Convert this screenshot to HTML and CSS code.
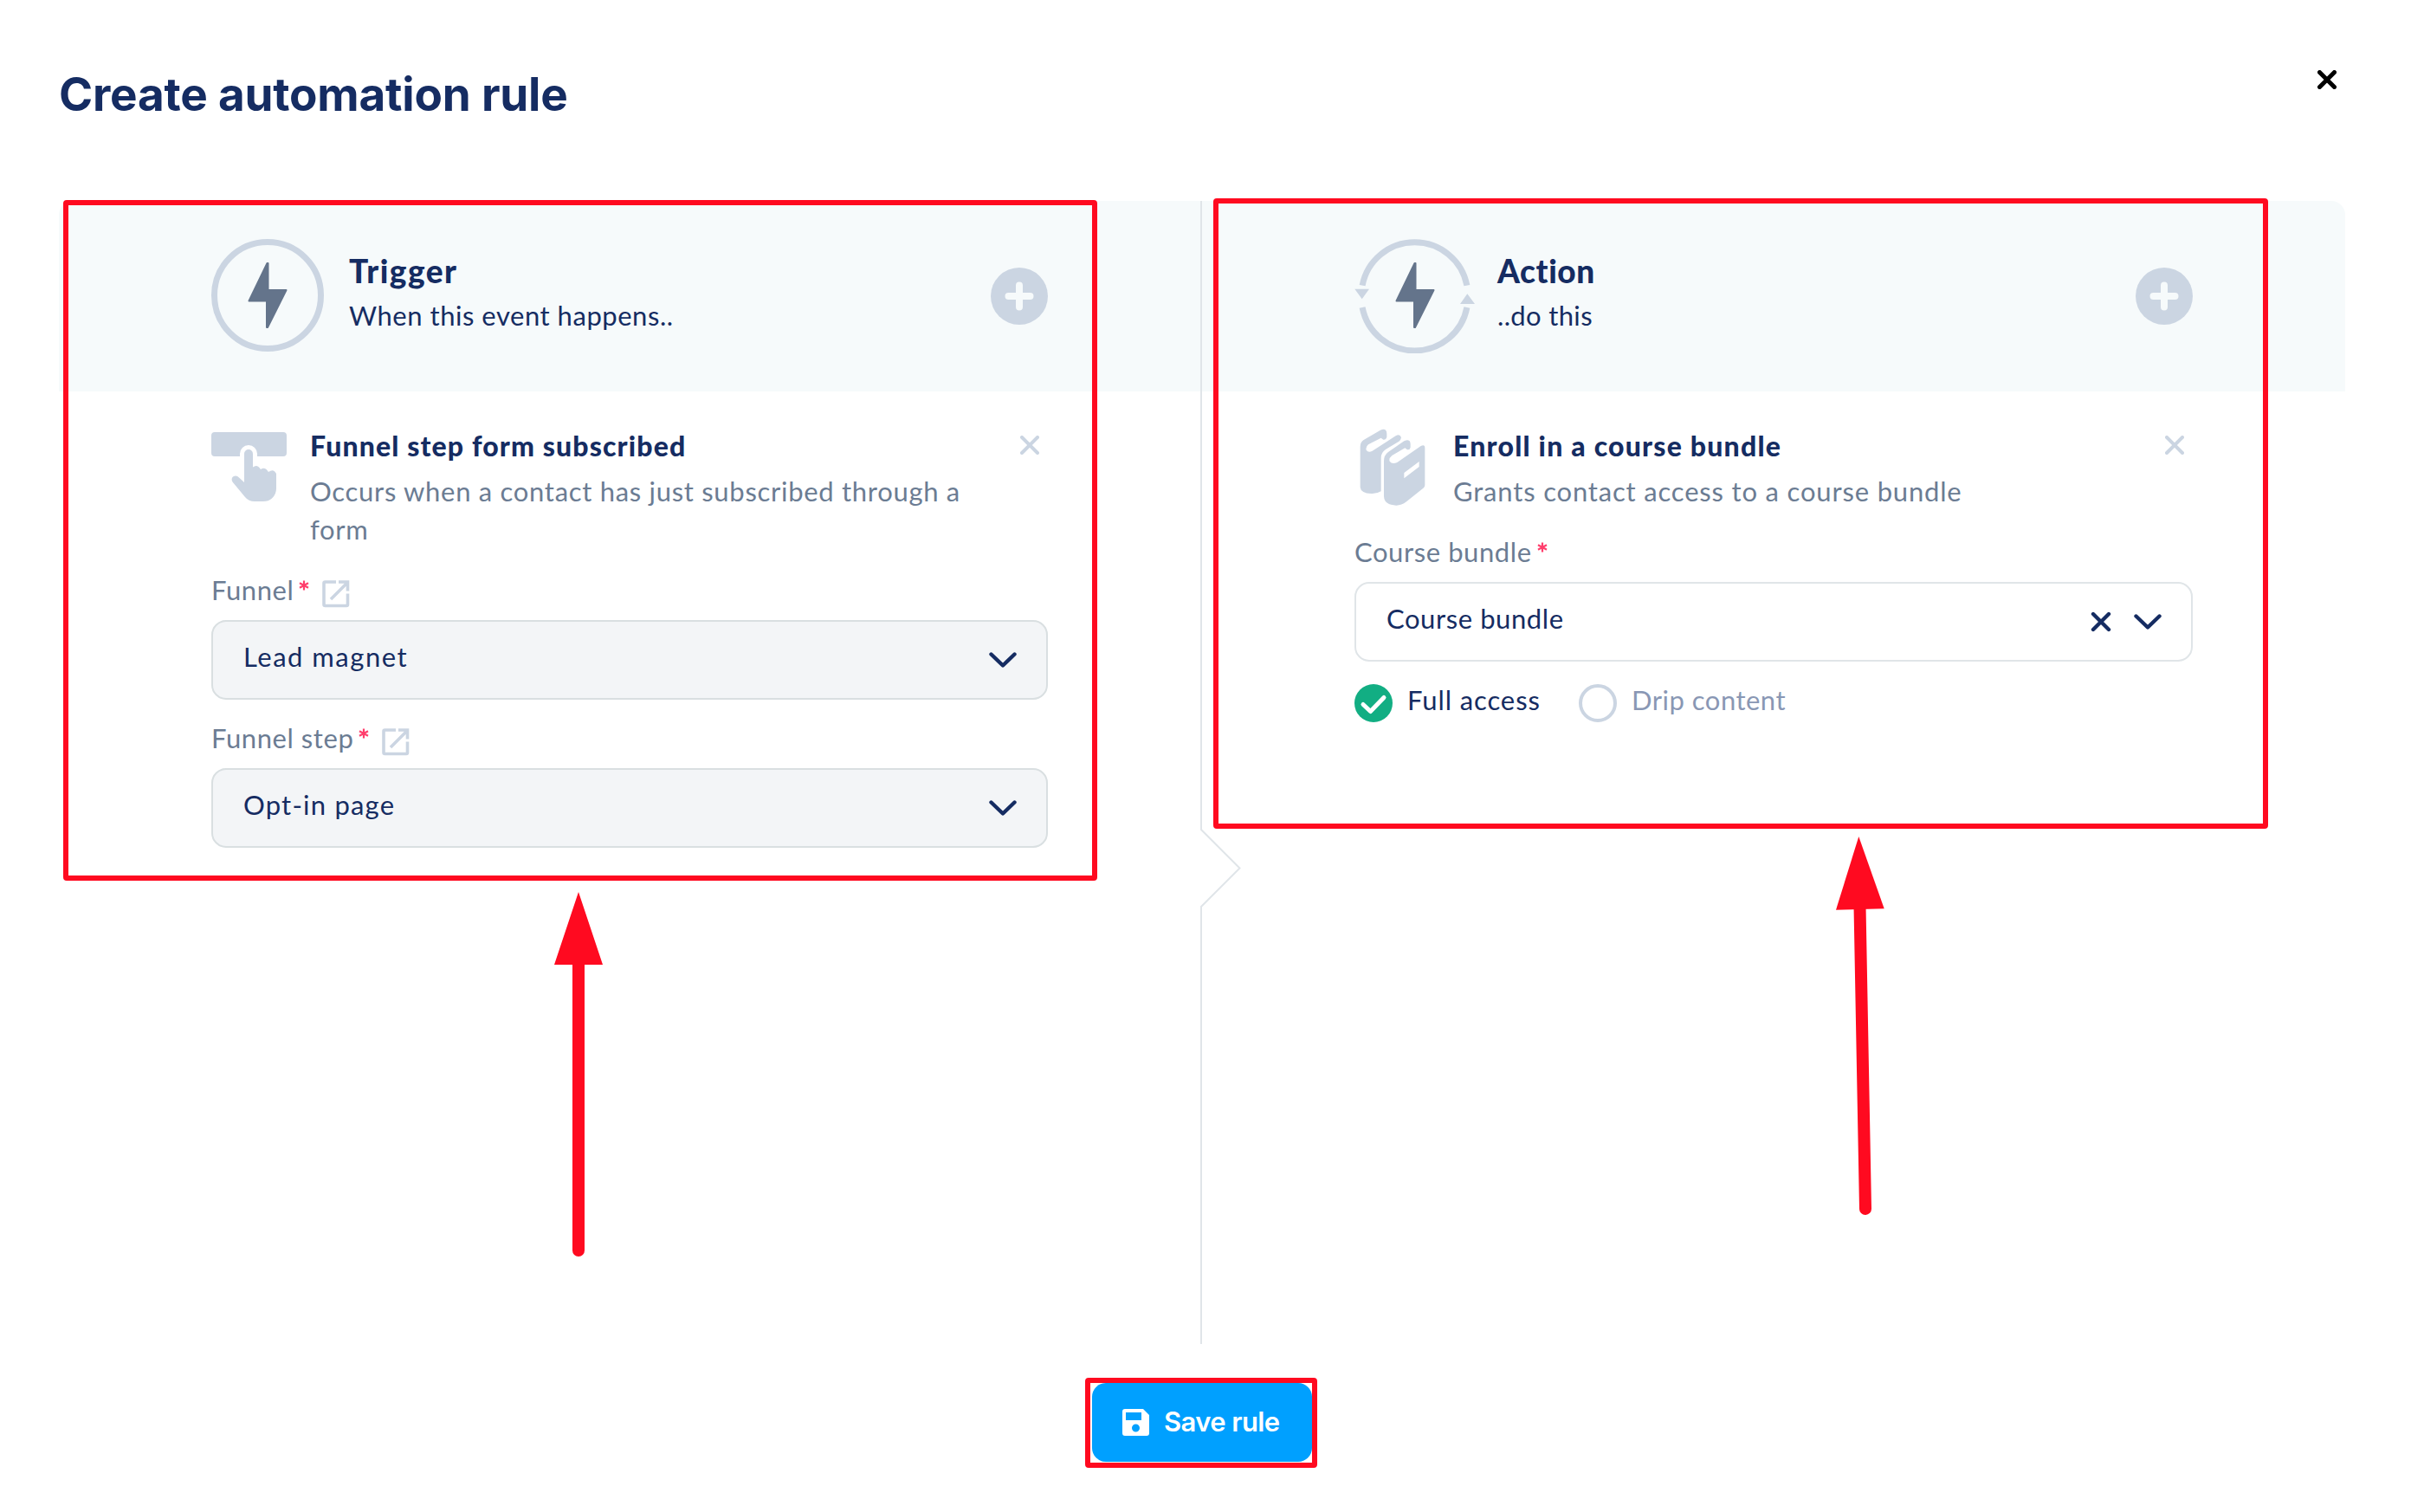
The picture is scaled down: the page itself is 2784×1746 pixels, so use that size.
FILE: index.html
```html
<!DOCTYPE html>
<html lang="en">
<head>
<meta charset="utf-8">
<title>Create automation rule</title>
<link rel="stylesheet" href="styles.css">
</head>
<body>
<main class="dialog">
  <header class="dialog-head">
    <h1 class="title">Create automation rule</h1>
    <button class="close" aria-label="Close"><svg width="22" height="22" viewBox="0 0 22 22"><path d="M2.500 2.500 19.500 19.500M19.500 2.500 2.500 19.500"/></svg></button>
  </header>

  <div class="board">
    <section class="column column-left">
      <div class="band band-left">
        <svg width="130" height="132" viewBox="0 0 130 132"><circle class="ring" cx="65" cy="65" r="61.5"/><path class="bolt" d="M65.500 28V59H86.500L65 102H64V71.500H43.500L64.500 28Z"/></svg>
        <div class="band-text"><h2 class="band-title t-trigger">Trigger</h2><p class="band-sub t-when">When this event happens..</p></div>
        <button class="add" aria-label="Add trigger"><svg width="66" height="66" viewBox="0 0 66 66"><circle cx="33" cy="33" r="33"/><path d="M33 20.500V45.500M20.500 33H45.500"/></svg></button>
      </div>
      <div class="body">
        <div class="item item-trigger">
          <svg class="item-icon tap" width="88" height="82" viewBox="0 0 88 82"><path d="M4 0H83Q87 0 87 4V24Q87 28 83 28H53V25A10 10 0 0 0 33 25V28H4Q0 28 0 24V4Q0 0 4 0Z"/><path d="M38 25A5 5 0 0 1 48 25V40.500Q53 36.500 57 43Q62 39.500 66 46Q72 41.500 75 48V65Q75 72 70 76.500Q66 80 60 80H50Q43 80 39 75L24.500 57.500Q22.500 54 25 51.500Q29 49 32 52.500L38 58Z"/></svg>
          <div class="item-text"><h3 class="item-title t-form">Funnel step form subscribed</h3><p class="item-desc t-occurs">Occurs when a contact has just subscribed through a<br>form</p></div>
          <button class="remove" aria-label="Remove"><svg width="22" height="22" viewBox="0 0 22 22"><path d="M2 2 20 20M20 2 2 20"/></svg></button>
        </div>
        <div class="label"><span class="t-label">Funnel</span><svg class="star" width="12" height="12" viewBox="0 0 12 12"><path d="M6 .5V11.500M1 3.200 11 8.800M11 3.200 1 8.800"/></svg><svg class="ext" width="32" height="32" viewBox="0 0 32 32"><path d="M16 2H3.500Q2 2 2 3.500V28Q2 29.500 3.500 29.500H28Q29.500 29.500 29.500 28V15.500M19 2H29.500V12.500M29 3 10 22"/></svg></div>
        <div class="field field-muted"><span class="value t-lead">Lead magnet</span><svg class="chev" width="32" height="18" viewBox="0 0 32 18"><path d="M2.500 2.500 16 15.500 29.500 2.500"/></svg></div>
        <div class="label label-next"><span class="t-label">Funnel step</span><svg class="star" width="12" height="12" viewBox="0 0 12 12"><path d="M6 .5V11.500M1 3.200 11 8.800M11 3.200 1 8.800"/></svg><svg class="ext" width="32" height="32" viewBox="0 0 32 32"><path d="M16 2H3.500Q2 2 2 3.500V28Q2 29.500 3.500 29.500H28Q29.500 29.500 29.500 28V15.500M19 2H29.500V12.500M29 3 10 22"/></svg></div>
        <div class="field field-muted"><span class="value t-opt">Opt-in page</span><svg class="chev" width="32" height="18" viewBox="0 0 32 18"><path d="M2.500 2.500 16 15.500 29.500 2.500"/></svg></div>
      </div>
    </section>

    <svg class="divider" width="48" height="1320" viewBox="0 0 48 1320"><path d="M1 0V726M0 725 45.500 770.500 1 815V1320"/></svg>

    <section class="column column-right">
      <div class="band band-right">
        <svg width="139" height="132" viewBox="0 0 139 132"><path class="ring" d="M9.100 53.700A61.500 61.500 0 0 1 129.900 53.700M9.100 79A61.500 61.500 0 0 0 129.900 79"/><path class="arrow" d="M0.300 57.700H17L8.700 69.300ZM122 75H139L130.300 63.300Z"/><path class="bolt" d="M70.500 28V59H91.500L70 102H69V71.500H48.500L69.500 28Z"/></svg>
        <div class="band-text band-text-action"><h2 class="band-title t-action">Action</h2><p class="band-sub t-do">..do this</p></div>
        <button class="add" aria-label="Add action"><svg width="66" height="66" viewBox="0 0 66 66"><circle cx="33" cy="33" r="33"/><path d="M33 20.500V45.500M20.500 33H45.500"/></svg></button>
      </div>
      <div class="body">
        <div class="item item-action">
          <svg class="item-icon" width="88" height="94" viewBox="42 45 264 282"><path d="M62 107Q62 92 74 84L132 50Q153 41 154 62V74Q151 84 142 83L134 77 90 100Q80 108 83 119Q90 130 104 122L185 70Q200 62 204 76Q203 84 196 89L150 117Q134 128 134 146V262Q120 271 100 270Q64 268 62 248Z"/><path fill-rule="evenodd" d="M144 157Q144 138 158 127L214 88Q235 78 236 98V110Q234 119 225 118L217 112 172 138Q160 148 164 158Q172 170 190 162L272 105Q286 98 286 112V240Q286 246 282 250L222 298Q205 311 187 311Q146 310 144 280ZM214 198 266 159V177L214 217Z"/></svg>
          <div class="item-text"><h3 class="item-title t-enroll">Enroll in a course bundle</h3><p class="item-desc t-grants">Grants contact access to a course bundle</p></div>
          <button class="remove" aria-label="Remove"><svg width="22" height="22" viewBox="0 0 22 22"><path d="M2 2 20 20M20 2 2 20"/></svg></button>
        </div>
        <div class="label"><span class="t-label">Course bundle</span><svg class="star" width="12" height="12" viewBox="0 0 12 12"><path d="M6 .5V11.500M1 3.200 11 8.800M11 3.200 1 8.800"/></svg></div>
        <div class="field"><span class="value t-bundle">Course bundle</span><svg class="chev clear" width="24" height="24" viewBox="0 0 24 24"><path d="M3 3 21 21M21 3 3 21"/></svg><svg class="chev" width="32" height="18" viewBox="0 0 32 18"><path d="M2.500 2.500 16 15.500 29.500 2.500"/></svg></div>
        <div class="radios">
          <svg width="44" height="44" viewBox="0 0 44 44"><circle class="on" cx="22" cy="22" r="22"/><path class="tick" d="M10 23.500 18.500 31.500 34 15.500"/></svg>
          <span class="radio-text t-full">Full access</span>
          <svg width="44" height="44" viewBox="0 0 44 44"><circle class="off" cx="22" cy="22" r="20"/></svg>
          <span class="radio-text radio-off t-drip">Drip content</span>
        </div>
      </div>
    </section>
  </div>

  <footer class="foot">
    <button class="save"><svg width="31" height="31" viewBox="0 0 31 31"><path fill-rule="evenodd" d="M3 0H24L31 7V28Q31 31 28 31H3Q0 31 0 28V3Q0 0 3 0ZM4 4V13H22V4ZM15.500 17.500A4.500 4.500 0 1 0 15.500 26.500A4.500 4.500 0 1 0 15.500 17.500Z"/></svg><span>Save rule</span></button>
  </footer>
</main>

<div class="mark mark-trigger"></div>
<div class="mark mark-action"></div>
<div class="mark mark-save"></div>
<svg class="pointer pointer-trigger" width="56" height="422" viewBox="0 0 56 422"><path class="shaft" d="M28 80V414"/><path class="tip" d="M28 0 56 84H0Z"/></svg>
<svg class="pointer pointer-action" width="60" height="440" viewBox="0 0 60 440"><path class="shaft" d="M27.500 80 34 430"/><path class="tip" d="M26.300 0 55.700 83.300 0 84.700Z"/></svg>
</body>
</html>
```

FILE: styles.css
```css
* { box-sizing: border-box; margin: 0; padding: 0; }
body { width: 2784px; height: 1746px; background: #fff; position: relative; overflow: hidden; color: #152c62; font-family: Lato, "Liberation Sans", sans-serif; font-size: 31px; font-weight: 400; }
button { border: 0; background: none; font: inherit; color: inherit; display: flex; flex: none; }
svg { display: block; flex: none; fill: none; }

.dialog { height: 1746px; padding: 0 76px 0 68px; display: flex; flex-direction: column; }
.dialog-head { height: 232px; display: flex; justify-content: space-between; align-items: flex-start; }
.title { font: 650 53px/64px Inter, "Liberation Sans", sans-serif; letter-spacing: -0.2px; margin-top: 77px; white-space: nowrap; }
.close { margin: 81px 10px 0 0; }
.close path { stroke: #000; stroke-width: 5; stroke-linecap: round; }

.board { display: flex; height: 1320px; }
.column { flex: none; }
.column-left { width: 1318px; }
.column-right { width: 1320px; }
.divider { margin-right: -46px; position: relative; }
.divider path { stroke: #e0e5e9; stroke-width: 2; }

.band { height: 220px; background: #f6fafb; display: flex; align-items: flex-start; padding: 44px 176px 0; }
.band-left { border-radius: 16px 0 0 0; }
.band-right { border-radius: 0 16px 0 0; }
.ring { stroke: #cbd5e2; stroke-width: 7; }
.bolt { fill: #64748b; stroke: #64748b; stroke-width: 2; stroke-linejoin: round; }
.arrow { fill: #cbd5e2; }
.band-text { flex: 1; margin-left: 29px; padding-top: 15px; white-space: nowrap; }
.band-text-action { margin-left: 26px; }
.band-title { font-size: 37px; line-height: 44px; font-weight: 900; }
.band-sub { line-height: 40px; margin-top: 9px; }
.add { margin-top: 33px; }
.add circle { fill: #cbd5e2; }
.add path { stroke: #f6fafb; stroke-width: 8; stroke-linecap: round; }

.body { padding: 43px 176px 0; }
.item { display: flex; align-items: flex-start; }
.item-trigger { height: 166px; }
.item-action { height: 122px; }
.item-icon path { fill: #cbd5e2; }
.tap { margin-top: 4px; }
.item-text { flex: 1; margin-left: 26px; white-space: nowrap; }
.item-title { font-size: 32px; line-height: 40px; font-weight: 900; }
.item-desc { line-height: 44px; margin-top: 10px; color: #6b7c93; }
.remove { margin: 8px 10px 0 0; }
.remove path { stroke: #cbd5e2; stroke-width: 4; stroke-linecap: round; }

.label { display: flex; height: 55px; line-height: 40px; color: #6b7c93; white-space: nowrap; }
.label-next { margin-top: 24px; }
.star { margin: 9px 0 0 6px; }
.star path { stroke: #ff3e6c; stroke-width: 2.2; }
.ext { margin: 9px 0 0 15px; }
.ext path { stroke: #cbd5e2; stroke-width: 3.6; }
.field { height: 92px; border: 2px solid #e0e5e8; border-radius: 17px; display: flex; align-items: center; padding: 0 34px 0 35px; }
.field-muted { background: #f3f5f7; border-color: #d9dfe1; }
.value { flex: 1; line-height: 40px; padding-bottom: 8px; white-space: nowrap; }
.chev path { stroke: #152c62; stroke-width: 4.4; stroke-linecap: round; stroke-linejoin: round; }
.clear { margin-right: 26px; }
.radios { display: flex; margin-top: 26px; }
.on { fill: #12ae83; }
.off { stroke: #cbd5e2; stroke-width: 4; }
.tick { stroke: #fff; stroke-width: 5; stroke-linejoin: round; stroke-linecap: round; }
.radio-text { line-height: 40px; margin: -2px 0 0 17px; white-space: nowrap; }
.radio-off { color: #8997b4; }

.t-trigger { letter-spacing: 1.5px; }
.t-action { letter-spacing: 0.6px; }
.t-when { letter-spacing: 0.53px; }
.t-do { letter-spacing: 0.35px; }
.t-form { letter-spacing: 1.12px; }
.t-occurs { letter-spacing: 0.7px; }
.t-enroll { letter-spacing: 1.2px; }
.t-grants { letter-spacing: 0.82px; }
.t-label { letter-spacing: 0.57px; }
.t-lead { letter-spacing: 1.5px; }
.t-opt { letter-spacing: 1.2px; }
.t-bundle { letter-spacing: 0.57px; }
.t-full { letter-spacing: 0.9px; width: 198px; }
.t-drip { letter-spacing: 0.5px; }

.foot { display: flex; justify-content: center; padding-top: 45px; }
.save { width: 254px; height: 91px; border-radius: 16px; background: #00a0ff; align-items: center; padding-left: 35px; color: #fff; font: 600 31px/40px Inter, "Liberation Sans", sans-serif; letter-spacing: -0.6px; white-space: nowrap; }
.save path { fill: #fff; }
.save span { margin: 0 0 2px 17px; }

.mark { position: absolute; border: 6px solid #ff0a20; border-radius: 4px; }
.mark-trigger { left: 73px; top: 231px; width: 1194px; height: 786px; }
.mark-action { left: 1401px; top: 229px; width: 1218px; height: 728px; }
.mark-save { left: 1253px; top: 1591px; width: 268px; height: 104px; }
.pointer { position: absolute; }
.pointer-trigger { left: 640px; top: 1030px; }
.pointer-action { left: 2120px; top: 966px; }
.shaft { stroke: #ff0a20; stroke-width: 14; stroke-linecap: round; }
.tip { fill: #ff0a20; }
```
